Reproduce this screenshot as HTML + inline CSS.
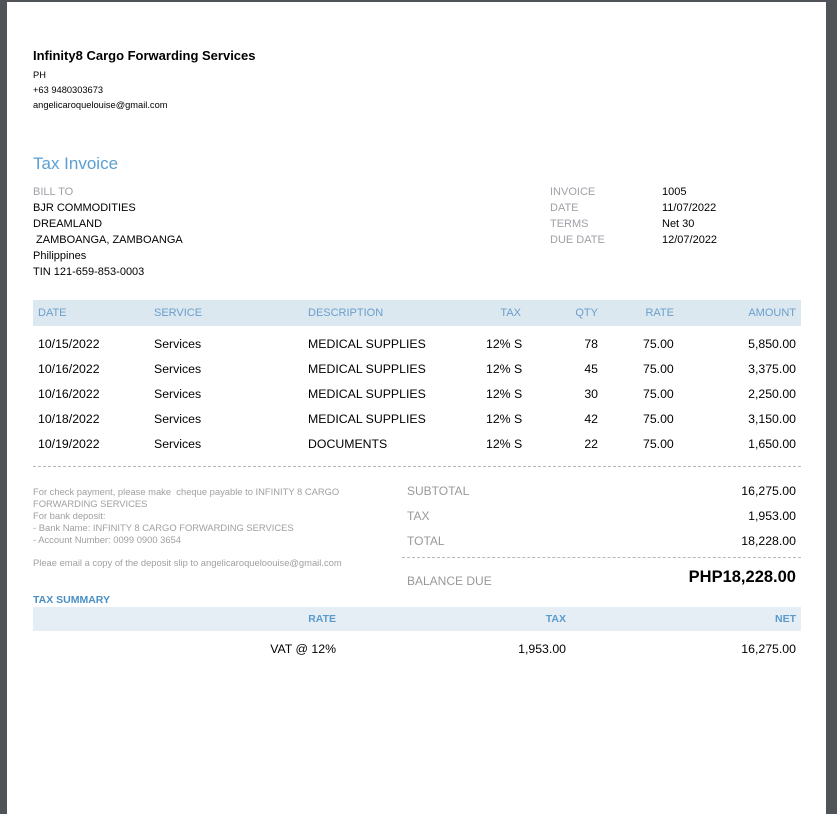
<!DOCTYPE html>
<html><head><meta charset="utf-8">
<style>
html,body{margin:0;padding:0;width:837px;height:814px;overflow:hidden;background:#505357;font-family:"Liberation Sans",Arial,sans-serif;}
#page{position:absolute;left:7px;top:2px;width:819px;height:812px;background:#fff;}
.t{position:absolute;white-space:nowrap;line-height:1;}
.r{text-align:right;}
.g{color:#8f8f8f;}
.b{color:#5a9bcb;}
.k{color:#000;}
</style></head><body>
<div id="page"></div>
<div style="position:absolute;left:0;top:0;width:837px;height:2px;background:#505357"></div>

<div class="t k" style="left:33px;top:49px;font-size:13px;font-weight:bold">Infinity8 Cargo Forwarding Services</div>
<div class="t k" style="left:33px;top:71px;font-size:9.3px">PH</div>
<div class="t k" style="left:33px;top:86px;font-size:9.3px">+63 9480303673</div>
<div class="t k" style="left:33px;top:101px;font-size:9.3px">angelicaroquelouise@gmail.com</div>

<div class="t" style="left:33px;top:155px;font-size:17px;color:#5a9fd2">Tax Invoice</div>

<div class="t g" style="left:33px;top:187px;font-size:11px;color:#a0a0a8">BILL TO</div>
<div class="t k" style="left:33px;top:203px;font-size:11px">BJR COMMODITIES</div>
<div class="t k" style="left:33px;top:219px;font-size:11px">DREAMLAND</div>
<div class="t k" style="left:33px;top:235px;font-size:11px">&nbsp;ZAMBOANGA, ZAMBOANGA</div>
<div class="t k" style="left:33px;top:251px;font-size:11px">Philippines</div>
<div class="t k" style="left:33px;top:267px;font-size:11px">TIN 121-659-853-0003</div>

<div class="t" style="left:550px;top:187px;font-size:11px;color:#a0a0a8">INVOICE</div>
<div class="t" style="left:550px;top:203px;font-size:11px;color:#a0a0a8">DATE</div>
<div class="t" style="left:550px;top:219px;font-size:11px;color:#a0a0a8">TERMS</div>
<div class="t" style="left:550px;top:235px;font-size:11px;color:#a0a0a8">DUE DATE</div>
<div class="t k" style="left:662px;top:187px;font-size:11px">1005</div>
<div class="t k" style="left:662px;top:203px;font-size:11px">11/07/2022</div>
<div class="t k" style="left:662px;top:219px;font-size:11px">Net 30</div>
<div class="t k" style="left:662px;top:235px;font-size:11px">12/07/2022</div>

<div style="position:absolute;left:33px;top:300px;width:768px;height:26px;background:#dce8f0"></div>
<div class="t b" style="left:38px;top:308px;font-size:11px;color:#6a9ecb">DATE</div>
<div class="t b" style="left:154px;top:308px;font-size:11px;color:#6a9ecb">SERVICE</div>
<div class="t b" style="left:308px;top:308px;font-size:11px;color:#6a9ecb">DESCRIPTION</div>
<div class="t b r" style="left:421px;width:100px;top:308px;font-size:11px;color:#6a9ecb">TAX</div>
<div class="t b r" style="left:498px;width:100px;top:308px;font-size:11px;color:#6a9ecb">QTY</div>
<div class="t b r" style="left:574px;width:100px;top:308px;font-size:11px;color:#6a9ecb">RATE</div>
<div class="t b r" style="left:596px;width:200px;top:308px;font-size:11px;color:#6a9ecb">AMOUNT</div>

<div id="rows"></div>
<script>
var d=[["10/15/2022","MEDICAL SUPPLIES","78","5,850.00"],["10/16/2022","MEDICAL SUPPLIES","45","3,375.00"],["10/16/2022","MEDICAL SUPPLIES","30","2,250.00"],["10/18/2022","MEDICAL SUPPLIES","42","3,150.00"],["10/19/2022","DOCUMENTS","22","1,650.00"]];
var h="";
d.forEach(function(r,i){var y=338+i*25;
h+='<div class="t k" style="left:38px;top:'+y+'px;font-size:12.3px">'+r[0]+'</div>';
h+='<div class="t k" style="left:154px;top:'+y+'px;font-size:12.3px">Services</div>';
h+='<div class="t k" style="left:308px;top:'+y+'px;font-size:12.3px">'+r[1]+'</div>';
h+='<div class="t k" style="left:486px;top:'+y+'px;font-size:12.3px">12% S</div>';
h+='<div class="t k r" style="left:498px;width:100px;top:'+y+'px;font-size:12.3px">'+r[2]+'</div>';
h+='<div class="t k" style="left:643px;top:'+y+'px;font-size:12.3px">75.00</div>';
h+='<div class="t k r" style="left:596px;width:200px;top:'+y+'px;font-size:12.3px">'+r[3]+'</div>';});
document.getElementById("rows").innerHTML=h;
</script>

<div style="position:absolute;left:33px;top:466px;width:768px;border-top:1px dashed #b8b8b8"></div>

<div class="t" style="left:33px;top:486px;font-size:9.4px;line-height:12px;color:#a0a0a0">For check payment, please make&nbsp; cheque payable to INFINITY 8 CARGO<br>FORWARDING SERVICES<br>For bank deposit:<br>- Bank Name: INFINITY 8 CARGO FORWARDING SERVICES<br>- Account Number: 0099 0900 3654</div>
<div class="t" style="left:33px;top:558px;font-size:9.4px;color:#a0a0a0">Pleae email a copy of the deposit slip to angelicaroqueloouise@gmail.com</div>

<div class="t" style="left:407px;top:485px;font-size:12px;color:#999">SUBTOTAL</div>
<div class="t" style="left:407px;top:510px;font-size:12px;color:#999">TAX</div>
<div class="t" style="left:407px;top:535px;font-size:12px;color:#999">TOTAL</div>
<div class="t k r" style="left:596px;width:200px;top:485px;font-size:12.3px">16,275.00</div>
<div class="t k r" style="left:596px;width:200px;top:510px;font-size:12.3px">1,953.00</div>
<div class="t k r" style="left:596px;width:200px;top:535px;font-size:12.3px">18,228.00</div>
<div style="position:absolute;left:402px;top:557px;width:399px;border-top:1px dashed #b8b8b8"></div>
<div class="t" style="left:407px;top:575px;font-size:12px;color:#999">BALANCE DUE</div>
<div class="t k r" style="left:496px;width:300px;top:569px;font-size:16.5px;font-weight:bold">PHP18,228.00</div>

<div class="t" style="left:33px;top:595px;font-size:10.5px;font-weight:bold;color:#4a8fc4">TAX SUMMARY</div>
<div style="position:absolute;left:33px;top:607px;width:768px;height:24px;background:#e6eef5"></div>
<div class="t r" style="left:136px;width:200px;top:614px;font-size:10.5px;font-weight:bold;color:#5a9bcb">RATE</div>
<div class="t r" style="left:366px;width:200px;top:614px;font-size:10.5px;font-weight:bold;color:#5a9bcb">TAX</div>
<div class="t r" style="left:596px;width:200px;top:614px;font-size:10.5px;font-weight:bold;color:#5a9bcb">NET</div>
<div class="t k r" style="left:136px;width:200px;top:643px;font-size:12.3px">VAT @ 12%</div>
<div class="t k r" style="left:366px;width:200px;top:643px;font-size:12.3px">1,953.00</div>
<div class="t k r" style="left:596px;width:200px;top:643px;font-size:12.3px">16,275.00</div>
</body></html>
